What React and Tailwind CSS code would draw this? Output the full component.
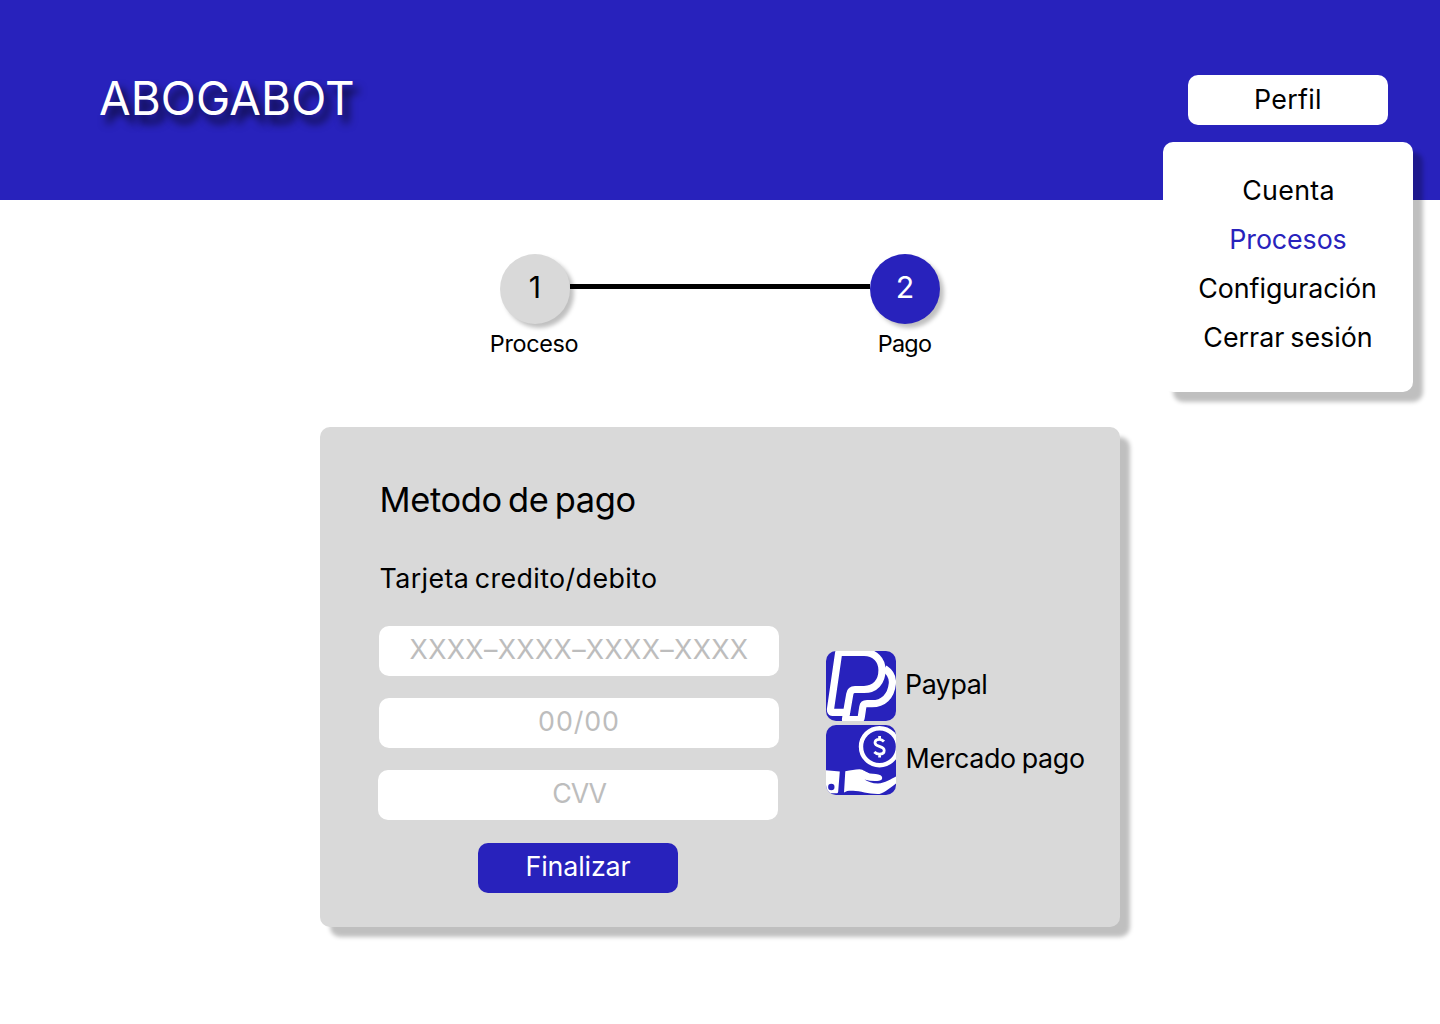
const menuItems = [
  { label: "Cuenta", tracking: "tracking-[0.3px] pl-[1px]" },
  { label: "Procesos", tracking: "tracking-[-0.1px]", active: true },
  { label: "Configuración", tracking: "tracking-[-0.04px] pr-[1px]" },
  { label: "Cerrar sesión", tracking: "tracking-[0px] [word-spacing:-1.5px]" },
];

function PaypalIcon() {
  return (
    <svg viewBox="0 0 70 70" className="size-[70px] rounded-[10px] bg-[#2822BC]" fill="none" stroke="#fff" strokeLinejoin="round">
      <path strokeWidth="7.2" d="M12.7 1.4H38C49 1.4 56 9 56 19C56 31 49 38.500 38 38.500H29C26 38.500 24.300 40 23.800 43L20.600 61.400H6.500C4.800 61.400 4.300 60 4.500 58Z" />
      <path strokeWidth="7.2" d="M58.500 17.500C64.500 21.500 67 27 66.300 33C65 45.500 57 52.700 46 52.700H41C38.500 52.700 37.200 53.500 36.800 56L35.200 66.500C35 67.800 34.300 68.500 33 68.500H19.500L20.600 61" />
    </svg>
  );
}

function HandCoinIcon() {
  return (
    <svg viewBox="0 0 70 70" className="size-[70px] rounded-[10px] bg-[#2822BC]" fill="none">
      <circle cx="53.500" cy="21.700" r="18.500" stroke="#fff" strokeWidth="4.400" />
      <path d="M58 16.500C56.500 14.900 55 14.300 53.300 14.300C50.700 14.300 49 15.700 49 17.700C49 22.300 58.200 20.500 58.200 25.600C58.200 27.800 56.200 29.200 53.500 29.200C51.500 29.200 49.800 28.500 48.300 27M53.600 11V14.500M53.600 29V32.500" stroke="#fff" strokeWidth="2.800" />
      <path d="M0 45.200L13.800 46.500L12.200 66.500C12.100 67.800 11.500 68.300 10.300 68.300H0Z" fill="#fff" />
      <circle cx="5.300" cy="62" r="3.200" fill="#2822BC" />
      <path d="M19.300 46.200C25 45.500 29 44.300 33.500 44.300C37.500 44.500 40 47.500 44 48.400C48 49 52 48.800 54.500 50.200C56.500 51.500 56.600 53.500 55.500 54.800C54.500 55.800 52 56 49 56C45.500 56 42 55.500 38.500 54.500C42 56.500 46 58.600 52 58.600C59 58 65 54 70 51.500V58.500C65 62 59 67.500 53.500 69C43 69.500 35 66 27 65.800C23.500 65.600 20.500 65.800 18 67.500Z" fill="#fff" />
    </svg>
  );
}

function Step({ number, circle, label, labelClass }) {
  return (
    <div className="flex w-[70px] flex-col items-center">
      <div className={`flex size-[70px] items-center justify-center rounded-full pb-[4px] text-[30.3px] leading-none shadow-[4px_4px_4px_rgba(0,0,0,0.25)] ${circle}`}>
        {number}
      </div>
      <span className={`mt-[6px] text-[23.4px] leading-[28px] whitespace-nowrap ${labelClass}`}>{label}</span>
    </div>
  );
}

export default function App() {
  return (
    <div className="h-[1024px] w-[1440px] overflow-hidden bg-white font-['Inter',sans-serif] text-[26.8px] leading-none text-black">
      <header className="flex h-[200px] items-start justify-between bg-[#2822BC] pr-[52px] pl-[99px]">
        <h1 className="mt-[69px] text-[45.8px] leading-[60px] tracking-[0.15px] text-white [text-shadow:6px_8px_8px_rgba(0,0,0,0.8)]">ABOGABOT</h1>
        <div className="relative mt-[75px]">
          <button className="flex h-[50px] w-[200px] items-center justify-center rounded-[10px] bg-white pb-[2px] tracking-[0.3px]">Perfil</button>
          <nav className="absolute top-[67px] left-[-25px] flex h-[250px] w-[250px] flex-col items-center rounded-[10px] bg-white pt-[24px] shadow-[10px_10px_4px_rgba(0,0,0,0.25)]">
            {menuItems.map((item) => (
              <a key={item.label} className={`h-[49px] leading-[49px] whitespace-nowrap ${item.tracking} ${item.active ? "text-[#2822BC]" : ""}`}>
                {item.label}
              </a>
            ))}
          </nav>
        </div>
      </header>

      <section className="mx-auto flex h-[227px] w-[440px] items-start pt-[54px]">
        <Step number="1" circle="bg-[#D9D9D9]" label="Proceso" labelClass="tracking-[-0.35px] pr-[2px]" />
        <div className="z-10 mt-[30px] h-[5px] w-[300px] bg-black" />
        <Step number="2" circle="bg-[#2822BC] text-white" label="Pago" labelClass="tracking-[-0.7px] pr-[1px]" />
      </section>

      <main className="mx-auto h-[500px] w-[800px] rounded-[10px] bg-[#D9D9D9] pt-[50px] pl-[58px] shadow-[10px_10px_4px_rgba(0,0,0,0.25)]">
        <h2 className="pl-[1.5px] text-[34.4px] leading-[46px] tracking-[-0.35px] [word-spacing:-3px]">Metodo de pago</h2>
        <h3 className="mt-[35px] pl-[1.5px] leading-[40px] tracking-[0.4px] [word-spacing:-2.5px]">Tarjeta credito/debito</h3>
        <div className="mt-[28px] flex">
          <div className="flex w-[401px] flex-col gap-[22px]">
            <div className="ml-[1px] flex h-[50px] w-[400px] items-center justify-center rounded-[10px] bg-white pb-[3px] tracking-[0.33px] text-[#BDBDBD]">XXXX–XXXX–XXXX–XXXX</div>
            <div className="ml-[1px] flex h-[50px] w-[400px] items-center justify-center rounded-[10px] bg-white pb-[3px] tracking-[0.9px] text-[#BDBDBD]">00/00</div>
            <div className="flex h-[50px] w-[400px] items-center justify-center rounded-[10px] bg-white pb-[3px] pl-[2px] tracking-[-1.1px] text-[#BDBDBD]">CVV</div>
            <button className="mt-[1px] ml-[100px] flex h-[50px] w-[200px] items-center justify-center rounded-[10px] bg-[#2822BC] pb-[3px] tracking-[-0.13px] text-white">Finalizar</button>
          </div>
          <div className="mt-[25px] ml-[47px] flex flex-col gap-[4px]">
            <div className="flex items-center gap-[9px]">
              <PaypalIcon />
              <span className="pb-[3px] tracking-[-0.45px]">Paypal</span>
            </div>
            <div className="flex items-center gap-[9.5px]">
              <HandCoinIcon />
              <span className="pb-[3px] tracking-[-0.32px] whitespace-nowrap [word-spacing:-1.3px]">Mercado pago</span>
            </div>
          </div>
        </div>
      </main>
    </div>
  );
}
